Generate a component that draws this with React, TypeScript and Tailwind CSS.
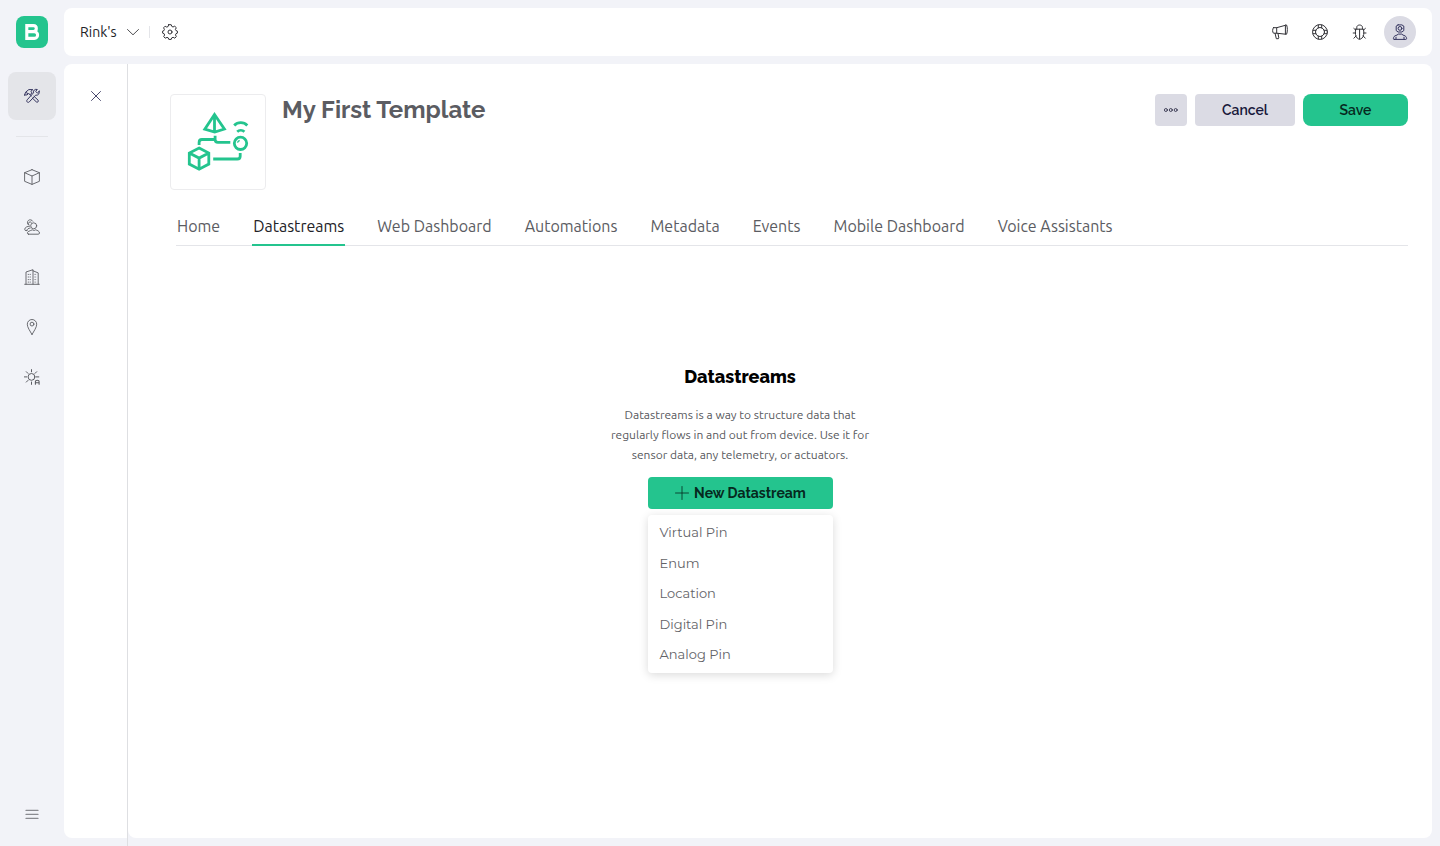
import type { ReactNode } from "react";

const body = "font-['Ubuntu','Noto_Sans',sans-serif]";
const heading = "font-['Raleway','Lato',sans-serif]";
const menuFont = "font-['Gotham','Montserrat','Inter',sans-serif]";

function Icon({ children, className = "size-4", width = 0.8 }: { children: ReactNode; className?: string; width?: number }) {
  return (
    <svg
      viewBox="0 0 16 16"
      className={className}
      fill="none"
      stroke="currentColor"
      strokeWidth={width}
      strokeLinecap="round"
      strokeLinejoin="round"
      aria-hidden="true"
    >
      {children}
    </svg>
  );
}

const ToolsIcon = () => (
  <Icon className="size-4 text-[#34345e]" width={1}>
    <path d="M.6 7 1.6 4.2 4.8 1.6h4L6.9 3.3l1 1.6-1.8 1.8-1.6-1.2L3 6.9.6 7zM2.2 4.6l1.6.9" />
    <path d="m10 8.3 4.1 3.9c1 1.1-.7 2.7-1.8 1.7L8.3 10M6.1 6.7l1.3 1.2" />
    <path d="M15.2 3.3 13.3 5l-1.7-1.6 1.7-1.9c-2.3-.8-4.4 1-3.8 3.3L3.2 11.8c-1.4 1.5.6 3.5 2.1 2.1l6.3-6.7c2.5.5 4.2-1.5 3.6-3.9z" />
  </Icon>
);
const CubeIcon = () => (
  <Icon width={0.9}>
    <path d="m8 .7 7.4 3v8.6L8 15.4l-7.4-3.1V3.7L8 .7zM.6 3.7 8 7l7.4-3.3M8 7v8.4" />
  </Icon>
);
const UsersIcon = () => (
  <Icon width={0.9}>
    <circle cx="9.7" cy="6.8" r="3" />
    <path d="M4.5 15.2c-1.5 0-1.5-1.8-.3-2.6 1.5-1 2.8-1 4.1-1.8 1.1.8 2.3.8 3.4 0 1.6.6 3.8 1.4 3.8 3.2 0 .7-.5 1.2-1.3 1.2H4.5z" />
    <path d="M8.8 2.2A2.9 2.9 0 1 0 4.6 6M7.2 3.2a1.8 1.8 0 0 0-2.5 2.5M5.7 7.1C3.2 7.3.7 8.5.7 10.3c0 .8.5 1.3 1.3 1.3h.8M6.2 9c-1.6.1-3.5 1.2-3.4 2.6" />
  </Icon>
);
const BuildingIcon = () => (
  <Icon width={0.9}>
    <path d="M.7 15.3h14.6M2 15.1V3l7-2.3v14.4M9 1.8l5.2 2.1v11.2" />
    <path d="M3.8 5.4h3.7M3.8 8h3.7M3.8 10.6h3.7M3.8 13.1h3.7M10.6 5.4h2M10.6 8h2M10.6 10.6h2M10.6 13.1h2" strokeWidth="1" strokeDasharray="1 .9" strokeLinecap="butt" />
  </Icon>
);
const PinIcon = () => (
  <Icon width={0.9}>
    <path d="M8 15.5C6 12 3.3 8.4 3.3 5.2a4.7 4.7 0 0 1 9.4 0C12.7 8.4 10 12 8 15.5z" />
    <circle cx="8" cy="5.1" r="1.9" />
  </Icon>
);
const SunIcon = () => (
  <Icon width={1}>
    <circle cx="7.5" cy="7.9" r="3.4" />
    <path d="M7.5.6v2.2M7.5 13v2.4M.3 7.9h2.4M12.3 7.9h2.5M2.3 2.7l1.7 1.7M12.7 2.7 11 4.4M2.3 13.1 4 11.4" />
    <path d="M11.4 15.3v-2.8c0-1.7 3.7-1.7 3.7 0v2.8M11.4 13.7h3.7" strokeWidth="1.1" />
  </Icon>
);
const GearIcon = () => (
  <Icon width={1}>
    <path d="m6.7.7-.6 1.8-1.3.6-1.7-.9-1.5 1.6.8 1.7-.4 1.1-1.4.5v2l1.5.6.5 1.3-.9 1.6 1.5 1.6 1.8-.8 1.2.4.6 1.6h2.4l.6-1.6 1.3-.5 1.7.9 1.5-1.6-.8-1.7.5-1.2 1.4-.6v-2l-1.5-.6-.5-1.1.9-1.7-1.6-1.5-1.7.8-1.2-.6L9.2.7H6.7z" />
    <circle cx="8" cy="8" r="2" />
  </Icon>
);
const MegaphoneIcon = () => (
  <Icon width={1}>
    <path d="M1.5 3.7h3.2l8.7-2.4v8.9L4.7 9.2H1.5C.3 8.2.3 4.7 1.5 3.7zM4.7 3.7v5.5M13.4 1h1.2c1 2.6 1 6.4 0 9.2h-1.2" />
    <path d="m3.1 9.4 1.2 5.3h2.1l.4-.8-.8-4.4" />
  </Icon>
);
const RingIcon = () => (
  <Icon width={1}>
    <circle cx="8" cy="8" r="7.4" />
    <circle cx="8" cy="8" r="4.5" />
    <path d="M6.3 1v3M9.7 1v3M6.3 12v3M9.7 12v3M1 6.3h3M1 9.7h3M12 6.3h3M12 9.7h3" />
  </Icon>
);
const BugIcon = () => (
  <Icon width={1}>
    <path d="M3.7 5.2h7.8c.7 4 .4 7.2-1.7 9.1-1.4 1.2-3 1.2-4.4 0-2.1-1.9-2.4-5.1-1.7-9.1zM7.6 5.2v9.8M4.8 5V3.2C4.8.3 10.4.3 10.4 3.2V5" />
    <path d="M3.6 6 1.8 4.4M3.4 9H1.2M4 12l-2.1 2.2M11.6 6l1.8-1.6M11.8 9h2.2M11.2 12l2.1 2.2" />
  </Icon>
);
const ProfileIcon = () => (
  <Icon width={1}>
    <path d="m6.1.9-1.9 1.2v4.5L6.1 8h3.8l1.9-1.4V2.1L9.9.9H6.1z" />
    <circle cx="8" cy="4.4" r="1.9" />
    <path d="M2.2 15.4c-.9 0-.9-1-.6-1.9.6-1.6 1.9-2 3.4-2.4l1.2-1h3.6l1.2 1c1.5.4 2.8.8 3.4 2.4.3.9.3 1.9-.6 1.9H2.2zM4 13.2v2M12 13.2v2" />
  </Icon>
);

const Artwork = () => (
  <svg viewBox="0 0 64 64" className="size-16" fill="none" stroke="#24c48e" strokeWidth="2.8" aria-hidden="true">
    <path d="M28.5 4.4 18.8 19.2l9.9 2.9 9.7-3.1L28.5 4.4zM28.5 4.4v17.5" />
    <path d="M48.2 15.4c3.6-3.7 9.5-3.7 13.1 0" />
    <path d="M51.2 21.7c2-1.9 5.2-1.9 7.2 0" />
    <circle cx="54.5" cy="33.3" r="6.2" />
    <path d="M51.5 32.7c.3-1.2 1-1.9 2.2-2.2" strokeWidth="1.4" />
    <path d="M13.1 35v-2.6c0-2 .9-2.9 2.8-2.9h13.2M29.1 25.8v3.7c0 1.9 1 2.8 2.8 2.8h12.4" />
    <path d="M27.2 49h24.1c1.9 0 2.9-1 2.9-2.8V43" />
    <path d="m13.1 38.1 9.7 5v11l-9.7 5.1-9.8-5.1v-11l9.8-5zM3.3 43.1l9.8 5 9.7-5M13.1 48.1v11" />
  </svg>
);

const nav = [
  { label: "Devices", icon: <CubeIcon /> },
  { label: "Users", icon: <UsersIcon /> },
  { label: "Organizations", icon: <BuildingIcon /> },
  { label: "Locations", icon: <PinIcon /> },
  { label: "Automations", icon: <SunIcon /> },
];
const tabs = ["Home", "Datastreams", "Web Dashboard", "Automations", "Metadata", "Events", "Mobile Dashboard", "Voice Assistants"];
const pinTypes = ["Virtual Pin", "Enum", "Location", "Digital Pin", "Analog Pin"];

function Sidebar() {
  return (
    <nav aria-label="Main" className="flex w-16 shrink-0 flex-col items-start pt-4 pb-2 pl-2 text-[#5b5c62]">
      <a href="#" aria-label="Blynk" className="ml-2 flex size-8 items-center justify-center rounded-lg bg-[#24c48e]">
        <svg viewBox="0 0 32 32" className="size-8" fill="none" stroke="white" strokeWidth="3.1" aria-hidden="true">
          <path d="M10.8 9.6h6.6c3.9 0 3.9 6 0 6h-6.6v-6zM10.8 15.6h7.5c4.4 0 4.4 6.8 0 6.8h-7.5v-6.8z" />
        </svg>
      </a>
      <a href="#" aria-label="Developer Zone" className="mt-6 flex size-12 items-center justify-center rounded-lg bg-[#e4e5e9]">
        <ToolsIcon />
      </a>
      <hr className="mt-4 mb-4 ml-2 w-8 border-[#e4e5e9]" />
      <div className="flex flex-col gap-0.5">
        {nav.map((item) => (
          <a key={item.label} href="#" aria-label={item.label} className="flex size-12 items-center justify-center">
            {item.icon}
          </a>
        ))}
      </div>
      <button type="button" aria-label="Menu" className="mt-auto flex size-12 items-center justify-center text-[#8a8b90]">
        <Icon width={1.2}>
          <path d="M2 4.4h12M2 8.4h12M2 12.4h12" />
        </Icon>
      </button>
    </nav>
  );
}

function TopBar() {
  return (
    <header className="flex h-12 items-center rounded-lg bg-white px-4 text-[#333338]">
      <button type="button" className="flex items-center gap-2 text-sm text-[#222226]">
        Rink's
        <Icon>
          <path d="m2.5 5.5 5.5 5.3 5.5-5.3" />
        </Icon>
      </button>
      <span className="mr-3 ml-2 h-3 w-px bg-[#e4e5e9]" />
      <button type="button" aria-label="Settings">
        <GearIcon />
      </button>
      <div className="ml-auto flex items-center gap-6">
        <button type="button" aria-label="Announcements"><MegaphoneIcon /></button>
        <button type="button" aria-label="Help"><RingIcon /></button>
        <button type="button" aria-label="Report a bug"><BugIcon /></button>
        <button type="button" aria-label="Profile" className="-ml-2 flex size-8 items-center justify-center rounded-full bg-[#dbdbe4] text-[#34345e]">
          <ProfileIcon />
        </button>
      </div>
    </header>
  );
}

function EmptyState() {
  return (
    <div className="flex flex-col items-center pt-[119px] pr-[98px]">
      <h2 className={`${heading} text-lg leading-6 font-extrabold text-black`}>Datastreams</h2>
      <p className="mt-4 text-center text-xs leading-5 text-[#58595d]">
        Datastreams is a way to structure data that
        <br />
        regularly flows in and out from device. Use it for
        <br />
        sensor data, any telemetry, or actuators.
      </p>
      <div className="relative mt-3 w-[185px]">
        <button type="button" aria-expanded="true" className={`${heading} flex h-8 w-full items-center justify-center gap-1 rounded bg-[#24c48e] text-sm font-bold text-[#06291e]`}>
          <Icon>
            <path d="M8 1.5v13M1.5 8h13" />
          </Icon>
          New Datastream
        </button>
        <ul className={`${menuFont} absolute top-full left-0 mt-1.5 flex h-[158px] w-full flex-col rounded bg-white py-[3px] text-[13px] text-[#636367] shadow-[0_2px_10px_rgba(0,0,0,0.15)]`}>
          {pinTypes.map((type) => (
            <li key={type} className="flex flex-1">
              <button type="button" className="flex w-full items-center px-3 text-left">{type}</button>
            </li>
          ))}
        </ul>
      </div>
    </div>
  );
}

export default function App() {
  return (
    <div className={`${body} flex min-h-screen bg-[#f2f3f8]`}>
      <Sidebar />
      <div className="flex min-w-0 flex-1 flex-col gap-2 pt-2 pr-2">
        <TopBar />
        <div className="flex flex-1">
          <aside className="flex w-16 shrink-0 border-r border-[#dedfe2] pb-2">
            <div className="flex flex-1 justify-center rounded-l-lg bg-white pt-6">
              <button type="button" aria-label="Close" className="flex size-4 items-center justify-center text-[#34345e]">
                <Icon width={0.9}>
                  <path d="m3.5 3.5 9 9M12.5 3.5l-9 9" />
                </Icon>
              </button>
            </div>
          </aside>
          <main className="mb-2 min-w-0 flex-1 rounded-r-lg rounded-bl-lg bg-white pt-[30px] pr-6 pl-[42px]">
            <div className="flex items-start">
              <div className="flex size-24 items-center justify-center rounded border border-[#ececee]">
                <Artwork />
              </div>
              <h1 className={`${heading} ml-4 text-2xl leading-8 font-bold text-[#5b5c62]`}>My First Template</h1>
              <div className={`${heading} ml-auto flex gap-2 text-sm font-semibold`}>
                <button type="button" aria-label="More actions" className="flex size-8 items-center justify-center rounded bg-[#dbdbe4] text-[#25253f]">
                  <Icon>
                    <circle cx="2.9" cy="8" r="1.5" />
                    <circle cx="7.8" cy="8" r="1.5" />
                    <circle cx="12.7" cy="8" r="1.5" />
                  </Icon>
                </button>
                <button type="button" className="h-8 w-[100px] rounded bg-[#dbdbe4] text-[#17173a]">Cancel</button>
                <button type="button" className="h-8 w-[105px] rounded-lg bg-[#24c48e] text-[#06291e]">Save</button>
              </div>
            </div>
            <nav aria-label="Template sections" className="mt-[18px] ml-1.5 flex gap-[31px] border-b border-[#e4e5e9] text-base text-[#5b5c62]">
              {tabs.map((tab) => (
                <a
                  key={tab}
                  href="#"
                  aria-current={tab === "Datastreams" ? "page" : undefined}
                  className={
                    tab === "Datastreams"
                      ? "-mb-px h-[38px] border-b-2 border-[#24c48e] px-px pt-1.5 leading-6 whitespace-nowrap text-[#222226]"
                      : "h-[37px] px-px pt-1.5 leading-6 whitespace-nowrap"
                  }
                >
                  {tab}
                </a>
              ))}
            </nav>
            <EmptyState />
          </main>
        </div>
      </div>
    </div>
  );
}
